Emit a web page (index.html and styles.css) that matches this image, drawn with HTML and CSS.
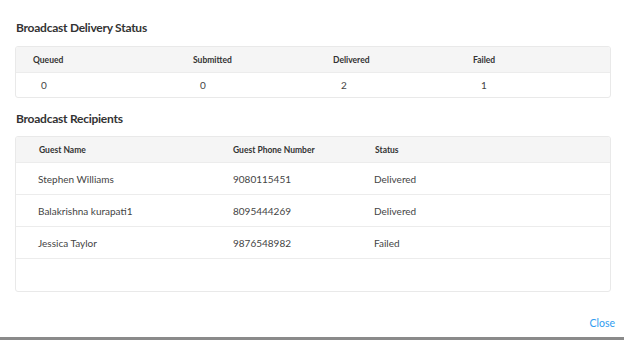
FILE: index.html
```html
<!DOCTYPE html>
<html lang="en">
<head>
    <meta charset="UTF-8">
    <meta name="viewport" content="width=device-width, initial-scale=1.0">
    <title>Broadcast Details</title>
    <link rel="stylesheet" href="styles.css">
</head>
<body>
    <div class="dialog">
        <h2 class="section-title">Broadcast Delivery Status</h2>
        <div class="table status-table">
            <div class="row head">
                <div>Queued</div>
                <div>Submitted</div>
                <div>Delivered</div>
                <div>Failed</div>
            </div>
            <div class="row body">
                <div>0</div>
                <div>0</div>
                <div>2</div>
                <div>1</div>
            </div>
        </div>

        <h2 class="section-title second">Broadcast Recipients</h2>
        <div class="table recipients-table">
            <div class="row head">
                <div>Guest Name</div>
                <div>Guest Phone Number</div>
                <div>Status</div>
            </div>
            <div class="row body">
                <div>Stephen Williams</div>
                <div>9080115451</div>
                <div>Delivered</div>
            </div>
            <div class="row body">
                <div>Balakrishna kurapati1</div>
                <div>8095444269</div>
                <div>Delivered</div>
            </div>
            <div class="row body">
                <div>Jessica Taylor</div>
                <div>9876548982</div>
                <div>Failed</div>
            </div>
            <div class="row body empty"></div>
        </div>

        <div class="actions">
            <a href="#" class="close-link">Close</a>
        </div>
    </div>
</body>
</html>
```

FILE: styles.css
```css
body {
    margin: 0;
    font-family: Lato, "Open Sans", sans-serif;
    background: #fff;
    color: #333;
}

.dialog {
    width: 624px;
    height: 340px;
    box-sizing: border-box;
    padding: 20px 13px 0 15px;
    border-bottom: 3px solid #8a8a8a;
    display: flex;
    flex-direction: column;
}

.section-title {
    margin: 0 0 10px 1px;
    font-size: 12px;
    letter-spacing: -0.25px;
    font-weight: 700;
    color: #333;
    line-height: 16px;
}

.section-title.second {
    margin-top: 13px;
    margin-bottom: 9px;
}

.table {
    border: 1px solid #e9e9e9;
    border-radius: 3px;
    overflow: hidden;
}

.row {
    display: grid;
    align-items: center;
    box-sizing: border-box;
}

.row.head {
    background: #f5f5f5;
    font-size: 8.5px;
    font-weight: 700;
    color: #333;
}

.status-table .row {
    grid-template-columns: 160px 140px 140px 1fr;
}

.status-table .row.head {
    height: 26px;
    padding-left: 17px;
    border-bottom: 1px solid #ececec;
}

.status-table .row.body {
    height: 24px;
    padding-left: 25px;
    font-size: 10px;
    color: #444;
}

.status-table .row.body div:nth-child(2) {
    margin-left: -1px;
}

.recipients-table .row {
    grid-template-columns: 194px 142px 1fr;
}

.recipients-table .row.head {
    height: 25px;
    padding-left: 23px;
}

.recipients-table .row.body {
    height: 32px;
    padding-left: 22px;
    border-top: 1px solid #ececec;
    font-size: 10px;
    color: #444;
}

.recipients-table .row.body div:nth-child(2) {
    margin-left: 1px;
}

.recipients-table .row.empty {
    height: 33px;
}

.actions {
    display: flex;
    justify-content: flex-end;
    margin-top: 25px;
}

.close-link {
    color: #2f9cf0;
    font-size: 10.5px;
    text-decoration: none;
    margin-right: -4px;
}
```
